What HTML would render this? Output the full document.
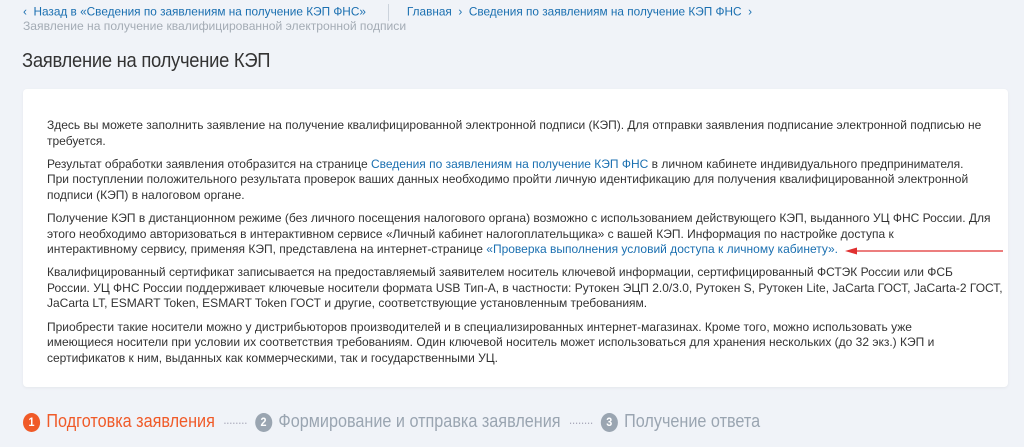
<!DOCTYPE html>
<html><head><meta charset="utf-8"><style>
body{margin:0;width:1024px;height:447px;background:#f0f3f8;font-family:"Liberation Sans",sans-serif;overflow:hidden;position:relative}
.bc{position:absolute;top:4px;left:23px;font-size:11.8px;line-height:14px;color:#1a6fb0;white-space:nowrap}
.bc .sep{display:inline-block;width:1px;height:17px;background:#ccd3dc;vertical-align:middle;margin:0 18px 0 22px}
.sub{position:absolute;top:19px;left:23px;font-size:12.1px;line-height:14px;color:#a4acb5}
h1{position:absolute;top:50px;left:22px;margin:0;font-weight:normal;font-size:20px;color:#333;letter-spacing:-0.3px;transform:scaleX(0.92);transform-origin:left}
.card{position:absolute;left:23px;top:89px;width:985px;height:298px;background:#fff;border-radius:4px;box-shadow:0 1px 3px rgba(0,0,0,.05)}
.txt{position:absolute;left:47px;top:118px;font-size:12px;line-height:15.6px;color:#333;white-space:nowrap}
.txt p{margin:0 0 7.5px}
a{color:#1a6fb0;text-decoration:none}
.steps{position:absolute;top:411px;left:23px;font-size:18px;white-space:nowrap;transform:scaleX(0.9);transform-origin:left}
.n{display:inline-block;width:19px;height:19px;border-radius:50%;color:#fff;font-size:12px;font-weight:bold;text-align:center;line-height:19px;vertical-align:1px;margin-right:7px}
.dots{color:#aab;letter-spacing:-1px;margin:0 9px;font-size:13px}
</style></head><body>
<div class="bc">‹&nbsp; Назад в «Сведения по заявлениям на получение КЭП ФНС»<span class="sep"></span>Главная &nbsp;›&nbsp; Сведения по заявлениям на получение КЭП ФНС &nbsp;›</div>
<div class="sub">Заявление на получение квалифицированной электронной подписи</div>
<h1>Заявление на получение КЭП</h1>
<div class="card"></div>
<div class="txt">
<p>Здесь вы можете заполнить заявление на получение квалифицированной электронной подписи (КЭП). Для отправки заявления подписание электронной подписью не<br>требуется.</p>
<p>Результат обработки заявления отобразится на странице <a>Сведения по заявлениям на получение КЭП ФНС</a> в личном кабинете индивидуального предпринимателя.<br>При поступлении положительного результата проверок ваших данных необходимо пройти личную идентификацию для получения квалифицированной электронной<br>подписи (КЭП) в налоговом органе.</p>
<p>Получение КЭП в дистанционном режиме (без личного посещения налогового органа) возможно с использованием действующего КЭП, выданного УЦ ФНС России. Для<br>этого необходимо авторизоваться в интерактивном сервисе «Личный кабинет налогоплательщика» с вашей КЭП. Информация по настройке доступа к<br>интерактивному сервису, применяя КЭП, представлена на интернет-странице <a>«Проверка выполнения условий доступа к личному кабинету».</a></p>
<p>Квалифицированный сертификат записывается на предоставляемый заявителем носитель ключевой информации, сертифицированный ФСТЭК России или ФСБ<br>России. УЦ ФНС России поддерживает ключевые носители формата USB Тип-А, в частности: Рутокен ЭЦП 2.0/3.0, Рутокен S, Рутокен Lite, JaCarta ГОСТ, JaCarta-2 ГОСТ,<br>JaCarta LT, ESMART Token, ESMART Token ГОСТ и другие, соответствующие установленным требованиям.</p>
<p>Приобрести такие носители можно у дистрибьюторов производителей и в специализированных интернет-магазинах. Кроме того, можно использовать уже<br>имеющиеся носители при условии их соответствия требованиям. Один ключевой носитель может использоваться для хранения нескольких (до 32 экз.) КЭП и<br>сертификатов к ним, выданных как коммерческими, так и государственными УЦ.</p>
</div>
<svg style="position:absolute;left:845px;top:246px" width="160" height="10"><line x1="8" y1="5" x2="158" y2="5" stroke="#e03030" stroke-width="1.2"/><polygon points="0,5 12,1.5 12,8.5" fill="#e03030"/></svg>
<div class="steps"><span class="n" style="background:#f05a28">1</span><span style="color:#f05a28">Подготовка заявления</span><span class="dots">········</span><span class="n" style="background:#9aa5b1">2</span><span style="color:#9aa5b1">Формирование и отправка заявления</span><span class="dots">········</span><span class="n" style="background:#9aa5b1">3</span><span style="color:#9aa5b1">Получение ответа</span></div>
</body></html>
